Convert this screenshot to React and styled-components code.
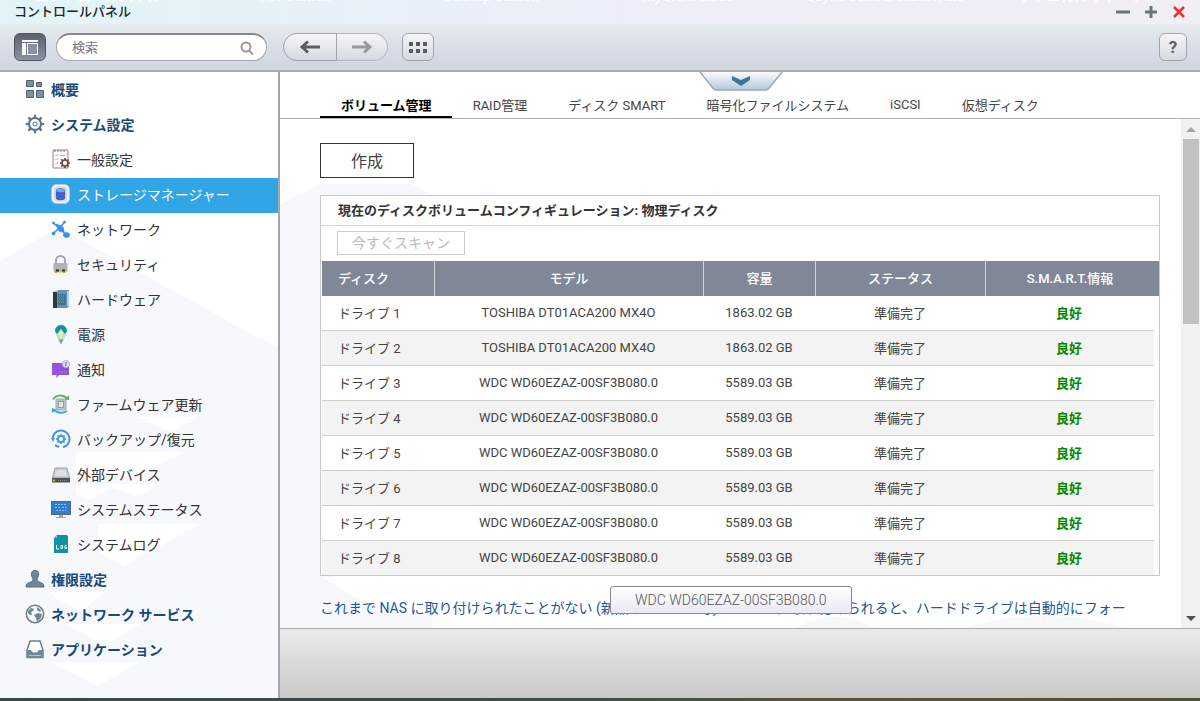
import { useState } from "react";
import styled, { createGlobalStyle, css } from "styled-components";

const GlobalStyle = createGlobalStyle`
  * {
    box-sizing: border-box;
  }
  body {
    margin: 0;
    font-family: Roboto, "Noto Sans CJK JP", sans-serif;
    font-size: 13px;
    color: #444;
  }
  button, input {
    font: inherit;
    color: inherit;
  }
`;

const Window = styled.div`
  display: flex;
  flex-direction: column;
  height: 100vh;
  overflow: hidden;
  background: #fff;
`;

const TitleBar = styled.header`
  position: relative;
  display: flex;
  align-items: center;
  justify-content: space-between;
  flex: none;
  height: 24px;
  padding: 0 13px 0 14px;
  overflow: hidden;
  background: linear-gradient(90deg, #e2f4f7, #e8f0f8 30%, #eeeef8 65%, #f2eef6);
`;

/* desktop shortcut names that show through the top edge of the window */
const Shortcuts = styled.div`
  position: absolute;
  top: -14px;
  left: 0;
  right: 0;
  display: grid;
  grid-template-columns: repeat(6, 1fr);
  padding-right: 20px;
  font-size: 14px;
  font-weight: 500;
  line-height: 20px;
  text-align: center;
  white-space: nowrap;
  color: #fff;
`;

const Title = styled.h1`
  position: relative;
  margin: 0;
  font-size: 13px;
  font-weight: 500;
  line-height: 24px;
  color: #222;
`;

const WindowButtons = styled.div`
  position: relative;
  display: flex;
  gap: 12px;
`;

const WindowButton = styled.button`
  display: flex;
  align-items: center;
  justify-content: center;
  width: 16px;
  height: 24px;
  padding: 0;
  border: 0;
  background: none;
`;

const Toolbar = styled.div`
  display: flex;
  align-items: center;
  flex: none;
  height: 48px;
  padding: 0 13px 0 14px;
  background: linear-gradient(#e6ebee, #d9dfe8 50%, #d0d5de);
  border-bottom: 2px solid #aaabae;
`;

const buttonFace = css`
  display: flex;
  align-items: center;
  justify-content: center;
  height: 28px;
  padding: 0;
  border: 1px solid #9fa5ae;
  background: linear-gradient(#f4f6f8, #d5dae1);
`;

const SquareButton = styled.button`
  ${buttonFace}
  width: 32px;
  border-radius: 6px;
  color: #596069;
  ${(p) =>
    p.$pressed &&
    css`
      border-color: #50565f;
      background: linear-gradient(#5b626d, #8b93a1);
    `}
`;

const HelpButton = styled(SquareButton)`
  width: 28px;
  margin-left: auto;
  font-size: 17px;
  font-weight: 700;
`;

const Search = styled.label`
  display: flex;
  align-items: center;
  width: 211px;
  height: 28px;
  margin: 0 16px 0 10px;
  padding: 0 12px 0 15px;
  border: 1px solid #a3a7ad;
  border-top: 2px solid #85898d;
  border-radius: 14px;
  background: #fff;
`;

const SearchInput = styled.input`
  flex: 1;
  min-width: 0;
  padding: 0;
  border: 0;
  outline: 0;
  background: none;
  &::placeholder {
    color: #777;
    opacity: 1;
  }
`;

const NavButtons = styled.div`
  display: flex;
  margin-right: 14px;
`;

const NavButton = styled.button`
  ${buttonFace}
  width: ${(p) => (p.$back ? 54 : 51)}px;
  border-radius: ${(p) => (p.$back ? "14px 0 0 14px" : "0 14px 14px 0")};
  ${(p) => !p.$back && "border-left: 0; border-color: #b4bac3;"}
`;

const Body = styled.div`
  display: flex;
  flex: 1;
  min-height: 0;
`;

const Sidebar = styled.nav`
  position: relative;
  flex: none;
  width: 280px;
  padding-top: 1px;
  border-right: 2px solid #a5a5a5;
  overflow: hidden;
`;

const Pattern = styled.svg`
  position: absolute;
  top: 0;
  left: 0;
  pointer-events: none;
`;

const NavList = styled.ul`
  position: relative;
  margin: 0;
  padding: 0;
  list-style: none;
`;

const NavItem = styled.a`
  display: flex;
  align-items: center;
  gap: 6px;
  height: 35px;
  padding-bottom: 4px;
  padding-left: ${(p) => (p.$group ? 25 : 51)}px;
  font-size: 14px;
  font-weight: ${(p) => (p.$group ? 700 : 400)};
  text-decoration: none;
  color: ${(p) => (p.$group ? "#174a78" : "#333")};
  ${(p) =>
    p.$selected &&
    css`
      color: #fff;
      background: #32a5e7;
    `}
  svg {
    flex: none;
  }
`;

const Main = styled.main`
  position: relative;
  display: flex;
  flex-direction: column;
  flex: 1;
  min-width: 0;
`;

const Handle = styled.button`
  position: absolute;
  top: 0;
  left: 50%;
  margin-left: -41px;
  padding: 0;
  border: 0;
  background: none;
  line-height: 0;
`;

const Tabs = styled.div`
  display: flex;
  align-items: flex-end;
  flex: none;
  height: 47px;
  padding-left: 40px;
  border-bottom: 1px solid #b0b0b0;
`;

const Tab = styled.button`
  height: 29px;
  padding: 4px 20px 0 21px;
  border: 0;
  border-bottom: 2px solid ${(p) => (p.$active ? "#000" : "transparent")};
  background: none;
  white-space: nowrap;
  font-weight: ${(p) => (p.$active ? 700 : 400)};
  color: ${(p) => (p.$active ? "#000" : "#444")};
`;

const ScrollArea = styled.div`
  display: flex;
  flex: 1;
  min-height: 0;
`;

const Content = styled.div`
  position: relative;
  flex: 1;
  min-width: 0;
  padding: 24px 21px 0 40px;
  overflow: hidden;
`;

const ScrollBar = styled.div`
  display: flex;
  flex-direction: column;
  align-items: center;
  justify-content: space-between;
  flex: none;
  width: 19px;
  padding-top: 2px;
  background: #f1f1f1;
`;

const ScrollArrow = styled.svg`
  flex: none;
  width: 17px;
  height: 18px;
`;

const Thumb = styled.div`
  width: 16px;
  height: 185px;
  margin-bottom: auto;
  background: #c1c1c1;
`;

const OutlineButton = styled.button`
  position: relative;
  display: block;
  height: 35px;
  padding: 0 30px 2px;
  border: 1px solid #333;
  background: #fff;
  font-size: 16px;
  color: #444;
  &:disabled {
    height: 24px;
    padding: 0 14px;
    border-color: #ccc;
    font-size: 14px;
    line-height: 20px;
    color: #bbb;
  }
`;

const Panel = styled.section`
  position: relative;
  margin-top: 17px;
  border: 1px solid #c8c8c8;
  background: #fff;
`;

const PanelTitle = styled.h2`
  margin: 0;
  padding-left: 17px;
  border-bottom: 1px solid #d8d8d8;
  font-size: 13px;
  font-weight: 700;
  line-height: 29px;
  color: #333;
`;

const PanelTools = styled.div`
  padding: 5px 16px 6px;
`;

const Table = styled.table`
  width: calc(100% - 6px);
  margin-left: 1px;
  border-collapse: separate;
  border-spacing: 0;
  table-layout: fixed;
`;

const HeadCell = styled.th`
  width: ${(p) => (p.$width ? p.$width + "px" : "auto")};
  height: 35px;
  padding: ${(p) => (p.$left ? "0 16px 2px" : "0 0 2px")};
  text-align: ${(p) => (p.$left ? "left" : "center")};
  font-weight: 500;
  color: #fff;
  background: #808897;
  border-right: 1px solid #d0d4da;
  &:last-child {
    border-right: 0;
    box-shadow: 5px 0 0 #808897;
  }
`;

const Row = styled.tr`
  &:nth-child(even) {
    background: #f3f3f3;
  }
  &:last-child td {
    height: 34px;
    border-bottom: 0;
  }
`;

const Cell = styled.td`
  height: 35px;
  padding: ${(p) => (p.$left ? "0 16px 2px" : "0 2px 2px 0")};
  text-align: ${(p) => (p.$left ? "left" : "center")};
  border-bottom: 1px solid #cfcfcf;
`;

const Good = styled.b`
  color: #008a00;
`;

const Note = styled.p`
  position: relative;
  margin: 20px 0 0;
  font-size: 14px;
  line-height: 24px;
  white-space: nowrap;
  color: #23569b;
`;

const Tooltip = styled.div`
  position: absolute;
  z-index: 1;
  top: 100%;
  left: 289px;
  margin-top: 11px;
  padding: 0 24px;
  border: 1px solid #888;
  border-radius: 3px;
  background: linear-gradient(#fff, #e9e8f4);
  font-size: 14px;
  font-weight: 300;
  line-height: 26px;
  color: #555;
`;

const Footer = styled.footer`
  flex: none;
  height: 70px;
  border-top: 1px solid #aaa;
  background: linear-gradient(#eaeaea, #c9c9c9);
`;

const Desktop = styled.div`
  flex: none;
  height: 3px;
  background: linear-gradient(90deg, #38494a, #3d4f48 50%, #5a5434 70%, #4d5030);
`;

const Icon = ({ children, size = 20 }) => (
  <svg width={size} height={size} viewBox="0 0 20 20" fill="none" aria-hidden="true">
    {children}
  </svg>
);

const gearTeeth = [0, 45, 90, 135, 180, 225, 270, 315];

const icons = {
  overview: (
    <g fill="#7890a3" stroke="#52636f">
      <path d="M1.500 1.500h7v6h-7zM11.500 3.500h5v4h-5zM1.500 11.500h7v7h-7zM11.500 11.500h7v7h-7z" />
    </g>
  ),
  system: (
    <g stroke="#5f7485">
      {gearTeeth.map((a) => (
        <path key={a} d="M9 4L9.500 1h1L11 4z" fill="#5f7485" transform={`rotate(${a} 10 10)`} />
      ))}
      <circle cx="10" cy="10" r="6" strokeWidth="2" fill="#f4f7f9" />
      <circle cx="10" cy="10" r="2" fill="#fff" />
    </g>
  ),
  general: (
    <>
      <path d="M2 1h15v18H2z" fill="#fafafa" stroke="#a08078" />
      <path d="M4 1v2M7 1v2M10 1v2M13 1v2" stroke="#777" />
      <path d="M4.500 6l1 1 1.500-2M4.500 10l1 1 1.500-2M4.500 14l1 1 1.500-2" stroke="#b3b3b3" />
      <path d="M9 6.500h5M9 10.500h3" stroke="#bbb" />
      {gearTeeth.map((a) => (
        <path key={a} d="M13.200 9h1.600v3h-1.600z" fill="#5b4c43" transform={`rotate(${a} 14 14)`} />
      ))}
      <circle cx="14" cy="14" r="3" fill="#f4eee9" stroke="#5b4c43" strokeWidth="1.600" />
    </>
  ),
  storage: (
    <>
      <rect x=".5" y=".5" width="18" height="19" rx="5" fill="#f0f2f5" stroke="#b9c5d3" />
      <rect x="3" y="2.500" width="13" height="15" rx="4" fill="#d3d8e0" />
      <path d="M5 6.500c0-3 9-3 9 0V14c0 3-9 3-9 0z" fill="#3d5bd0" />
      <ellipse cx="9.500" cy="6.500" rx="4.500" ry="1.800" fill="#58b4f3" />
      <path d="M5 9.500c1 2 8 2 9 0M5 12.500c1 2 8 2 9 0" stroke="#8a55c4" />
    </>
  ),
  network: (
    <g stroke="#3d8fea" fill="#3d8fea">
      <path d="M2 3.500l14 13M14 3L3 14" strokeWidth="1.500" />
      <path d="M5 5l7 3 1 5-5-1z" />
      <circle cx="2.500" cy="4" r="1" />
      <circle cx="13.500" cy="3" r="1" />
      <circle cx="2.500" cy="14.500" r="1.500" />
      <ellipse cx="15.500" cy="16" rx="3" ry="2.300" />
    </g>
  ),
  security: (
    <>
      <path d="M5 10V6.500a4.500 4.500 0 019 0V10" stroke="#a4a8ad" strokeWidth="2" />
      <rect x="2.500" y="9" width="14" height="9" rx="1" fill="#aeb3b8" />
      <path d="M3 17.500h13" stroke="#e8ba3c" strokeWidth="2" />
      <path d="M5 16.500h3M11 16.500h3" stroke="#26332a" strokeWidth="2" />
      <path d="M4 18h2M12 18h2" stroke="#d23b2d" />
    </>
  ),
  hardware: (
    <>
      <path d="M2 3l3-2h13l-3 2z" fill="#c2d2de" />
      <path d="M2 3h4v16H2z" fill="#30373d" />
      <path d="M6 3l2-2h10v16l-2 2H6z" fill="#5b93bd" />
      <path d="M7 5h8v11H7z" fill="#43728d" />
      <path d="M8 7h6M8 10h6M8 13h6" stroke="#7fb98d" strokeDasharray="1 1" />
      <path d="M17 2v15" stroke="#a8cfeb" strokeWidth="2" />
    </>
  ),
  power: (
    <>
      <path d="M4 6.500a6 6 0 0112 0c0 4-2.500 5-3 10H7c-.5-5-3-6-3-10z" fill="#b7e0dd" />
      <path d="M4 7a6 6 0 0112 0l-2 3-4-5-4 5z" fill="#178f9f" />
      <path d="M10 5l-2 5 2 6 2-6z" fill="#dff3a0" />
      <path d="M8 16.500h4M9 18.500h2" stroke="#87989b" strokeWidth="2" />
    </>
  ),
  notice: (
    <>
      <path d="M1 4h17v12H8l-2.500 3V16H1z" fill="#9453dd" />
      <path d="M9 13h8" stroke="#b485ec" strokeDasharray="1 1" />
      <circle cx="15" cy="5" r="3.500" fill="#dfe2ef" stroke="#b0b6d0" />
      <path d="M15 3v3l-1 1" stroke="#7048c0" />
    </>
  ),
  firmware: (
    <>
      <path d="M2 5.500c3-5 10-5 14-1" stroke="#62b456" strokeWidth="2" />
      <path d="M13 6h5V1z" fill="#62b456" />
      <path d="M3 15.500c3 4 9 4 13 1.500" stroke="#35a8e9" strokeWidth="2" />
      <path d="M1 14v5l5-3z" fill="#35a8e9" />
      <rect x="5" y="5" width="10" height="11" rx="1" fill="#b7c1c9" stroke="#9fabb4" />
      <rect x="7.500" y="7.500" width="5" height="6" fill="#dde4e9" stroke="#93a0aa" />
    </>
  ),
  backup: (
    <>
      <path d="M1.500 10A8.500 8.500 0 1112 18.200M8 18.200L4 16" stroke="#4a8fec" strokeWidth="2" />
      <path d="M0 9h4l-2 4z" fill="#4a8fec" />
      {gearTeeth.map((a) => (
        <path key={a} d="M9.200 5h1.600v3H9.200z" fill="#3ba1df" transform={`rotate(${a} 10 10)`} />
      ))}
      <circle cx="10" cy="10" r="3" fill="#fff" stroke="#3ba1df" strokeWidth="2" />
    </>
  ),
  external: (
    <>
      <path d="M4 4h12l2.500 10h-17z" fill="#c7ccd1" stroke="#9ca2a8" />
      <path d="M6 6h8l2 6H4z" fill="#dde1e5" />
      <path d="M1 14h18v4.500H1z" fill="#50544f" />
      <path d="M2 16.500h2" stroke="#98d04a" strokeWidth="2" />
      <path d="M7 16.500h10" stroke="#83877f" strokeDasharray="1 1" />
    </>
  ),
  status: (
    <>
      <rect x=".5" y="2.500" width="19" height="13" fill="#2d7dd2" stroke="#56697a" />
      <path d="M4 5.500h12M4 8.500h5M11 8.500h5M5 11.500h10" stroke="#8fc2f2" strokeDasharray="2 1" />
      <path d="M8 16h4v2h3v1H5v-1h3z" fill="#9ca6af" />
    </>
  ),
  log: (
    <>
      <path d="M6 1h9a2 2 0 012 2v16H3V4z" fill="#1191a6" />
      <path d="M3 4l3-3v3z" fill="#88cdd6" />
      <path d="M5.500 11v4H8M10 11.500h1.500v3H10zM15.500 11.500H14v3h1.500V13" stroke="#fff" />
    </>
  ),
  user: (
    <path
      d="M10 1.500c3 0 4 2 3.500 4.500-.4 2-1 3.500-1.500 4 0 2 1 2.500 3.500 3.500 2.500.8 3.500 2 3.500 4.500H1c0-2.500 1-3.700 3.500-4.500C7 12.500 8 12 8 10c-.5-.5-1.100-2-1.500-4C6 3.500 7 1.500 10 1.500z"
      fill="#6f8799"
      stroke="#5a6f7f"
    />
  ),
  globe: (
    <>
      <circle cx="10" cy="10" r="8.700" fill="#f4f7f9" stroke="#6f7f8b" strokeWidth="1.500" />
      <path d="M3 7l3-3 3 1-1 2-2 1 1 3-2 0-2-2zM9 11l4-2 4 1-1 4-4 4-1-4zM12 3l4 3-1 2-3-2z" fill="#6f8799" />
    </>
  ),
  apps: (
    <>
      <path d="M5 2h10l3 9v7.500H2V11z" fill="#fff" stroke="#6c7f8d" strokeWidth="1.500" />
      <path d="M2 11h4l2 2.500h4l2-2.500h4v8H2z" fill="#6f8799" />
      <path d="M4 16.500h12" stroke="#b7c4ce" />
    </>
  ),
};

const navigation = [
  { id: "overview", label: "概要", group: true },
  { id: "system", label: "システム設定", group: true },
  { id: "general", label: "一般設定" },
  { id: "storage", label: "ストレージマネージャー" },
  { id: "network", label: "ネットワーク" },
  { id: "security", label: "セキュリティ" },
  { id: "hardware", label: "ハードウェア" },
  { id: "power", label: "電源" },
  { id: "notice", label: "通知" },
  { id: "firmware", label: "ファームウェア更新" },
  { id: "backup", label: "バックアップ/復元" },
  { id: "external", label: "外部デバイス" },
  { id: "status", label: "システムステータス" },
  { id: "log", label: "システムログ" },
  { id: "user", label: "権限設定", group: true },
  { id: "globe", label: "ネットワーク サービス", group: true },
  { id: "apps", label: "アプリケーション", group: true },
];

const shortcuts = [
  "コントロールパネル",
  "File Station",
  "Backup Station",
  "myQNAPcloud",
  "Qsync Central Station 2.0",
  "テクニカルサポート",
];

const tabs = ["ボリューム管理", "RAID管理", "ディスク SMART", "暗号化ファイルシステム", "iSCSI", "仮想ディスク"];

const toshiba = { model: "TOSHIBA DT01ACA200 MX4O", size: "1863.02 GB" };
const wdc = { model: "WDC WD60EZAZ-00SF3B080.0", size: "5589.03 GB" };
const disks = [toshiba, toshiba, wdc, wdc, wdc, wdc, wdc, wdc];

export default function App() {
  const [selected, setSelected] = useState("storage");
  const [tab, setTab] = useState(0);

  return (
    <Window>
      <GlobalStyle />
      <TitleBar>
        <Shortcuts aria-hidden="true">
          {shortcuts.map((name) => (
            <span key={name}>{name}</span>
          ))}
        </Shortcuts>
        <Title>コントロールパネル</Title>
        <WindowButtons>
          <WindowButton aria-label="最小化">
            <svg width="14" height="14" fill="none"><path d="M0 7h14" stroke="#6b757d" strokeWidth="3" /></svg>
          </WindowButton>
          <WindowButton aria-label="最大化">
            <svg width="14" height="14" fill="none"><path d="M1 7h12M7 1v12" stroke="#6b757d" strokeWidth="3" /></svg>
          </WindowButton>
          <WindowButton aria-label="閉じる">
            <svg width="14" height="14" fill="none"><path d="M2 2l10 10M12 2L2 12" stroke="#ef3030" strokeWidth="2.500" /></svg>
          </WindowButton>
        </WindowButtons>
      </TitleBar>

      <Toolbar>
        <SquareButton $pressed aria-label="サイドバー">
          <svg width="16" height="15" fill="#fff">
            <path d="M0 0h16v2H0zM0 3h4v12H0z" />
            <path d="M5.500 3.500h10v11h-10z" fill="#8b93a1" stroke="#fff" />
          </svg>
        </SquareButton>
        <Search>
          <SearchInput type="text" placeholder="検索" aria-label="検索" />
          <svg width="14" height="14" fill="none" stroke="#999" strokeWidth="2">
            <circle cx="6" cy="6" r="4.500" />
            <path d="M9 9.500l4 4" />
          </svg>
        </Search>
        <NavButtons>
          <NavButton $back aria-label="戻る">
            <svg width="22" height="14" fill="none" stroke="#5b5f65" strokeWidth="3">
              <path d="M3 7h18M9 1.500L3 7l6 5.500" />
            </svg>
          </NavButton>
          <NavButton aria-label="進む">
            <svg width="22" height="14" fill="none" stroke="#94999f" strokeWidth="3">
              <path d="M1 7h18M13 1.500L19 7l-6 5.500" />
            </svg>
          </NavButton>
        </NavButtons>
        <SquareButton aria-label="一覧">
          <svg width="18" height="12" fill="#565c64">
            <path d="M0 1h4v4H0zM7 1h4v4H7zM14 1h4v4h-4zM0 8h4v4H0zM7 8h4v4H7zM14 8h4v4h-4z" />
          </svg>
        </SquareButton>
        <HelpButton aria-label="ヘルプ">?</HelpButton>
      </Toolbar>

      <Body>
        <Sidebar>
          <Pattern width="280" height="626">
            <path d="M0 189l52-30q6-2 12 0L278 276v350H0z" fill="#f7f8fc" />
            <path
              d="M138 345h58l-24 15-10-4zM76 380h110l-14 6-42 20-20-8-20 10-14-6zM76 412h84l-20 12-28-8-22 12-14-6zM98 452h102l-62 34-14 8-26-14zM50 520h56l-26 20-26-16zM50 552h90l-34 21-52-26zM50 590h90l-42 24-48-24z"
              fill="#fff"
            />
          </Pattern>
          <NavList>
            {navigation.map((item) => (
              <li key={item.id}>
                <NavItem
                  href={"#" + item.id}
                  $group={item.group}
                  $selected={item.id === selected}
                  onClick={() => setSelected(item.id)}
                >
                  <Icon>{icons[item.id]}</Icon>
                  {item.label}
                </NavItem>
              </li>
            ))}
          </NavList>
        </Sidebar>

        <Main>
          <Tabs role="tablist">
            {tabs.map((name, i) => (
              <Tab key={name} role="tab" aria-selected={i === tab} $active={i === tab} onClick={() => setTab(i)}>
                {name}
              </Tab>
            ))}
          </Tabs>
          <Handle aria-label="詳細を開く">
            <svg width="84" height="20" fill="none">
              <defs>
                <linearGradient id="handle" x1="0" y1="0" x2="0" y2="1">
                  <stop offset="0" stopColor="#fafbfc" />
                  <stop offset="1" stopColor="#b4c9da" />
                </linearGradient>
              </defs>
              <path d="M1 0l12 15q2 3 5 3h48q3 0 5-3L83 0" fill="url(#handle)" stroke="#9aabb9" strokeWidth="1.500" />
              <path d="M33 4l9 4 9-4v4l-9 6-9-6z" fill="#3f7697" />
            </svg>
          </Handle>

          <ScrollArea>
            <Content>
              <Pattern width="900" height="510">
                <path d="M0 86l36-19q4-2 8-2h88l28 15v370H40l52 25 60 18v17H0z" fill="#f7f8fc" />
                <path d="M42 458h520v36H100z" fill="#fff" />
                <path d="M515 509q40-22 80 0zM685 509q80-24 160 0z" fill="#f7f8fc" />
              </Pattern>
              <OutlineButton>作成</OutlineButton>
              <Panel>
                <PanelTitle>現在のディスクボリュームコンフィギュレーション: 物理ディスク</PanelTitle>
                <PanelTools>
                  <OutlineButton disabled>今すぐスキャン</OutlineButton>
                </PanelTools>
                <Table>
                  <thead>
                    <tr>
                      <HeadCell $left $width={113}>ディスク</HeadCell>
                      <HeadCell>モデル</HeadCell>
                      <HeadCell $width={112}>容量</HeadCell>
                      <HeadCell $width={170}>ステータス</HeadCell>
                      <HeadCell $width={168}>S.M.A.R.T.情報</HeadCell>
                    </tr>
                  </thead>
                  <tbody>
                    {disks.map((disk, i) => (
                      <Row key={i}>
                        <Cell $left>ドライブ {i + 1}</Cell>
                        <Cell>{disk.model}</Cell>
                        <Cell>{disk.size}</Cell>
                        <Cell>準備完了</Cell>
                        <Cell><Good>良好</Good></Cell>
                      </Row>
                    ))}
                  </tbody>
                </Table>
                <Tooltip role="tooltip">WDC WD60EZAZ-00SF3B080.0</Tooltip>
              </Panel>
              <Note>
                これまで NAS に取り付けられたことがない (新品のドライブ等)が、NAS に取り付けられると、ハードドライブは自動的にフォー
              </Note>
            </Content>
            <ScrollBar aria-hidden="true">
              <ScrollArrow viewBox="0 0 17 18"><path d="M4 11l5-5 5 5z" fill="#a3a3a3" /></ScrollArrow>
              <Thumb />
              <ScrollArrow viewBox="0 0 17 18"><path d="M4 6l5 5 5-5z" fill="#505050" /></ScrollArrow>
            </ScrollBar>
          </ScrollArea>
          <Footer />
        </Main>
      </Body>
      <Desktop />
    </Window>
  );
}
